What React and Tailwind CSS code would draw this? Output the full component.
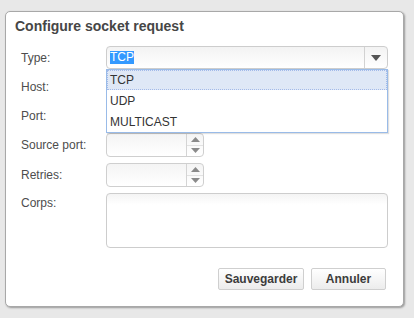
import React from "react";

const font = { fontFamily: '"Liberation Sans", Arial, sans-serif' };

const Label = ({ children, top }) => (
  <div className={`w-[85px] shrink-0 text-[12px] text-[#4d4d4d] ${top ? "pt-[1px]" : "self-center"}`}>
    {children}
  </div>
);

const Spinner = () => (
  <div className="flex h-[24px] w-[98px] rounded-[4px] border border-[#cfcfcf] bg-gradient-to-b from-[#f4f4f4] to-white">
    <div className="flex-1" />
    <div className="flex w-[17px] flex-col border-l border-[#d4d4d4]">
      <div className="flex flex-1 items-center justify-center border-b border-[#e2e2e2]">
        <svg width="9" height="5" viewBox="0 0 9 5">
          <path d="M0 5 L4.5 0 L9 5 Z" fill="#8a8a8a" />
        </svg>
      </div>
      <div className="flex flex-1 items-center justify-center">
        <svg width="9" height="5" viewBox="0 0 9 5">
          <path d="M0 0 L9 0 L4.5 5 Z" fill="#8a8a8a" />
        </svg>
      </div>
    </div>
  </div>
);

export default function App() {
  const options = ["TCP", "UDP", "MULTICAST"];

  return (
    <div className="h-[318px] w-[414px] bg-[#e8e8e8] pl-[5px] pt-[11px]" style={font}>
      <div className="flex h-[296px] w-[399px] flex-col rounded-[5px] border border-[#a8a8a8] bg-white shadow-[1px_1px_2px_rgba(0,0,0,0.35)]">
        <h1 className="pl-[9px] pt-[6px] text-[14px] font-bold leading-[16px] text-[#464646]">
          Configure socket request
        </h1>

        <div className="mt-[12px] flex flex-col gap-[6px] pl-[15px] pr-[15px]">
          {/* Type */}
          <div className="flex h-[23px]">
            <Label>Type:</Label>
            <div className="relative flex-1">
              <div className="flex h-[23px] rounded-[4px] border border-[#cdcdcd] bg-gradient-to-b from-[#f3f3f3] to-white">
                <div className="flex flex-1 items-center pl-[3px] text-[12px]">
                  <span className="bg-[#3399ff] leading-[13px] text-white">TCP</span>
                </div>
                <div className="flex w-[23px] items-center justify-center border-l border-[#d2d2d2]">
                  <svg width="10" height="6" viewBox="0 0 10 6">
                    <path d="M0 0 L10 0 L5 6 Z" fill="#555" />
                  </svg>
                </div>
              </div>
              <ul className="absolute left-0 right-0 top-[23px] z-10 border border-[#99bbe8] bg-white text-[12px] text-[#333] shadow-[1px_1px_1px_rgba(0,0,0,0.12)]">
                {options.map((o, i) => (
                  <li
                    key={o}
                    className={`flex items-center pl-[2px] ${
                      i === 0
                        ? "h-[20px] border border-dotted border-[#a3bae9] bg-[#dfe8f6]"
                        : "h-[21px] border border-transparent"
                    }`}
                  >
                    {o}
                  </li>
                ))}
              </ul>
            </div>
          </div>

          {/* Host */}
          <div className="flex h-[23px]">
            <Label>Host:</Label>
            <div className="h-[23px] flex-1 rounded-[4px] border border-[#cdcdcd]" />
          </div>

          {/* Port */}
          <div className="flex h-[23px]">
            <Label>Port:</Label>
            <div className="h-[23px] w-[98px] rounded-[4px] border border-[#cdcdcd]" />
          </div>

          <div className="flex h-[24px]">
            <Label>Source port:</Label>
            <Spinner />
          </div>

          <div className="flex h-[24px]">
            <Label>Retries:</Label>
            <Spinner />
          </div>

          <div className="flex">
            <Label top>Corps:</Label>
            <textarea className="h-[55px] flex-1 resize-none rounded-[4px] border border-[#cdcdcd] bg-gradient-to-b from-[#f4f4f4] to-white to-[20%] outline-none" />
          </div>
        </div>

        <div className="mt-[20px] flex justify-end gap-[7px] pr-[17px]">
          <button className="h-[22px] w-[86px] rounded-[2px] border border-[#cfcfcf] bg-gradient-to-b from-white to-[#ececec] text-[12px] font-bold text-[#3c3c3c]">
            Sauvegarder
          </button>
          <button className="h-[22px] w-[75px] rounded-[2px] border border-[#cfcfcf] bg-gradient-to-b from-white to-[#ececec] text-[12px] font-bold text-[#3c3c3c]">
            Annuler
          </button>
        </div>
      </div>
    </div>
  );
}
